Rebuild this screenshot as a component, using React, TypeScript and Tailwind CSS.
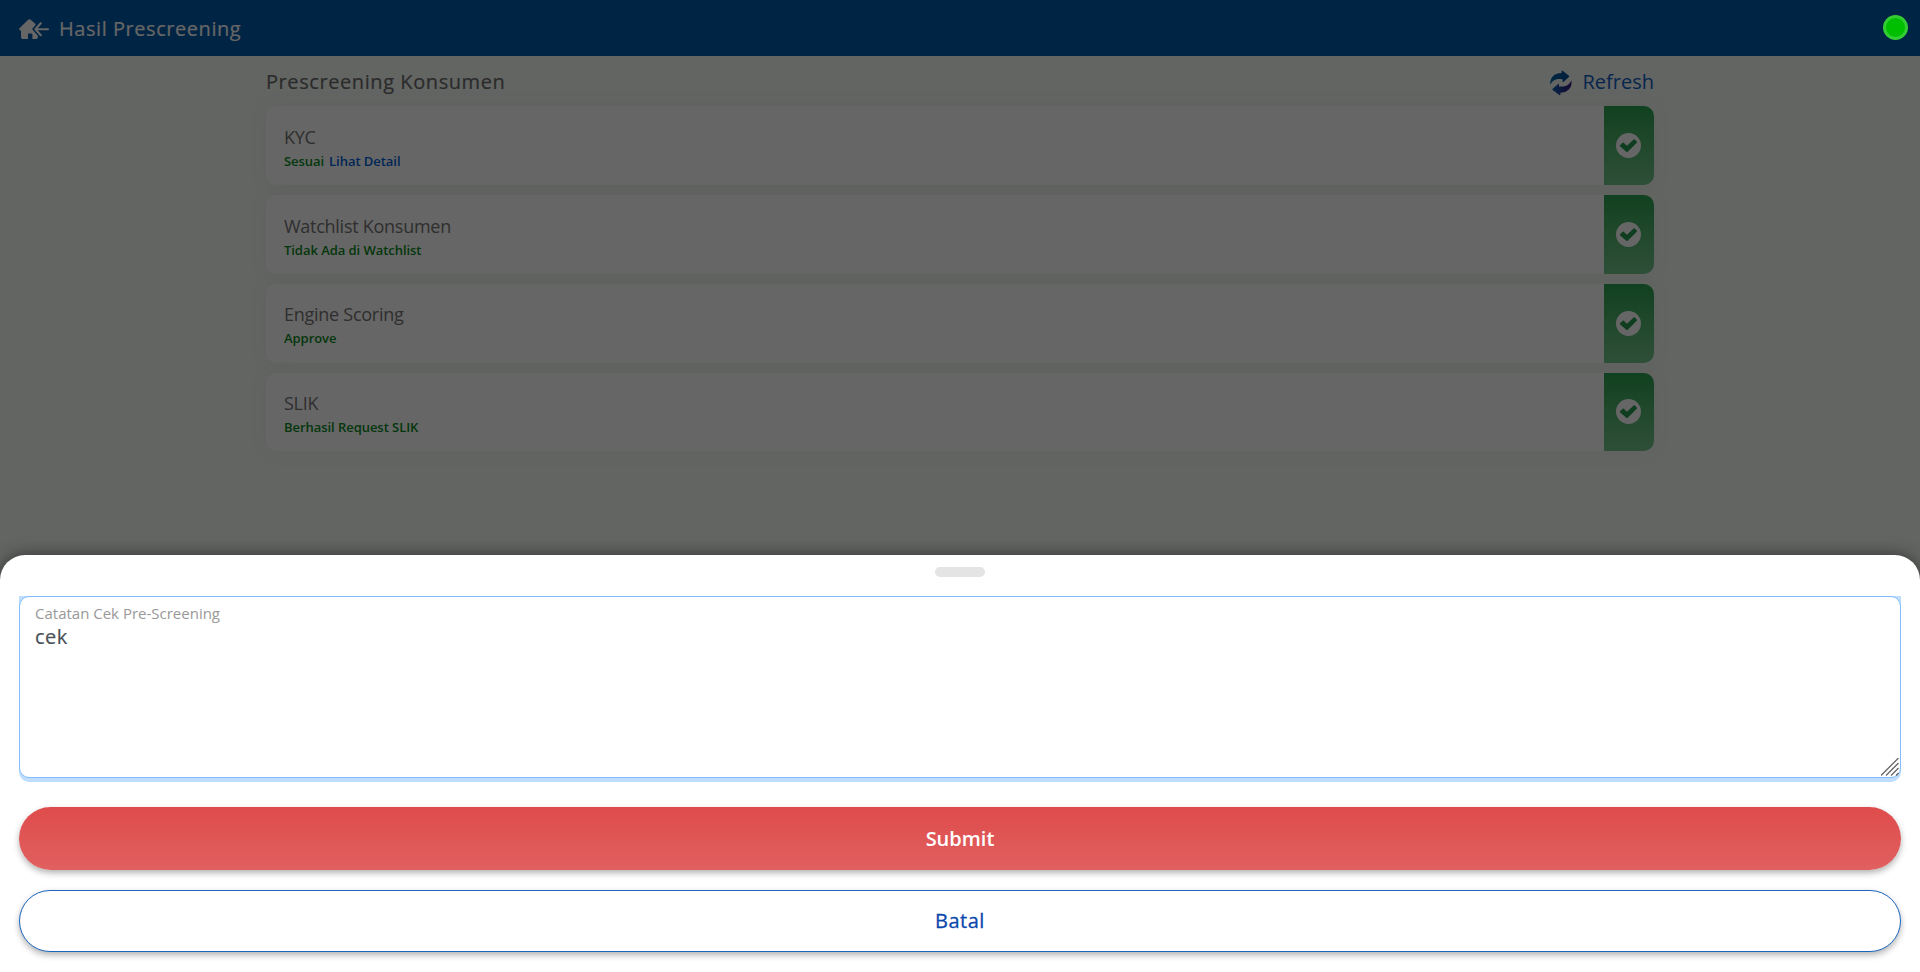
import React from "react";

const cards = [
  { title: "KYC", status: "Sesuai", link: "Lihat Detail", height: "h-[79px]", pad: "pt-[3px]", iconPad: "pb-0" },
  { title: "Watchlist Konsumen", status: "Tidak Ada di Watchlist", height: "h-[79px]", pad: "pt-[3px]", iconPad: "pb-0" },
  { title: "Engine Scoring", status: "Approve", height: "h-[79px]", pad: "pt-[1px]", iconPad: "pb-0" },
  { title: "SLIK", status: "Berhasil Request SLIK", height: "h-[78px]", pad: "pt-[2px]", iconPad: "pb-[1px]" },
];

function HomeBackIcon() {
  return (
    <svg viewBox="0 0 30 20" className="h-5 w-[30px]" fill="#fff">
      <path d="M9.4 0.6 Q10.4 -0.3 11.4 0.6 L16 4.6 Q17 5.5 16.2 6.4 L13.6 9.2 Q13 10 13.6 10.8 L18.6 16.4 Q19.3 17.4 18.8 18.4 Q18.4 20 17 20 H13.4 V15.4 Q13.4 14.6 12.6 14.6 H9.8 Q9 14.6 9 15.4 V20 H3.4 Q2 20 2 18.6 V11.4 H1 Q-0.6 10.4 0.5 9.3 Z" />
      <path d="M21.8 4.2 L16.4 10.2 L21.8 16.2 M16.4 10.2 H29" fill="none" stroke="#fff" strokeWidth="2.1" strokeLinejoin="round" strokeLinecap="round" />
    </svg>
  );
}

function RefreshIcon() {
  return (
    <svg viewBox="0 0 22 26" className="mt-[2px] h-[26px] w-[22px]">
      <defs>
        <linearGradient id="r1" x1="0" y1="0" x2="1" y2="0">
          <stop offset="0" stopColor="#0064a8" />
          <stop offset="1" stopColor="#004c94" />
        </linearGradient>
        <linearGradient id="r2" x1="0" y1="0" x2="1" y2="0">
          <stop offset="0" stopColor="#0a60b4" />
          <stop offset="1" stopColor="#3c1478" />
        </linearGradient>
      </defs>
      <path fill="url(#r1)" d="M0.4 14.8 C-0.4 7.4 4.4 3 11.6 3 V1 Q11.8 0.2 12.6 0.8 L18.9 5.7 Q19.5 6.3 18.9 6.9 L13.4 12 Q12.7 12.4 12.6 11.6 V9.4 C7.4 8.4 2.8 9.6 0.4 14.8 Z" />
      <path fill="url(#r2)" d="M21.4 10.6 C22.4 17.8 17.6 22.4 10.4 22.7 V24.8 Q10.2 25.6 9.4 25 L2.6 19.9 Q2 19.4 2.6 18.8 L8.2 13.9 Q8.9 13.5 9 14.3 V16.4 C14.6 17 19 16 21.4 10.6 Z" />
    </svg>
  );
}

function CheckIcon() {
  return (
    <svg viewBox="0 0 25 25" className="mr-[1px] size-[25px]">
      <circle cx="12.5" cy="12.5" r="12.5" fill="#fff" />
      <path
        d="M3.9 12.4 L6.5 9.7 Q7.1 9.2 7.7 9.7 L11 12.8 L17.6 6.4 Q18.2 5.9 18.8 6.4 L20.8 8.5 Q21.3 9.1 20.8 9.7 L11.7 18.8 Q11 19.4 10.3 18.8 L3.9 13.3 Q3.5 12.8 3.9 12.4 Z"
        fill="#249a4e"
      />
    </svg>
  );
}

export default function App() {
  return (
    <div className="relative h-[972px] w-full overflow-hidden bg-[#f7fcf8] font-['Open_Sans',sans-serif]">
      <header className="flex h-14 items-center bg-[#005aaa] pl-[19px] pt-[2px]">
        <HomeBackIcon />
        <h1 className="ml-[10px] text-[20px] font-medium leading-[30px] tracking-[0.55px] text-white [-webkit-text-stroke:0.15px]">Hasil Prescreening</h1>
      </header>
      <main className="mx-auto w-[1388px]">
        <div className="flex h-[50px] items-center justify-between pt-[2px]">
          <h2 className="text-[20px] font-medium leading-[30px] tracking-[0.58px] text-[#6b6b6b] [-webkit-text-stroke:0.2px]">Prescreening Konsumen</h2>
          <button className="flex items-center text-[20px] leading-[30px] text-[#0f5cc0]">
            <RefreshIcon />
            <span className="ml-[10px]">Refresh</span>
          </button>
        </div>
        <div className="flex flex-col gap-[10px]">
          {cards.map((c) => (
            <section key={c.title} className={`flex ${c.height} rounded-[10px] bg-white shadow-[0_0_20px_rgba(80,100,40,0.07)]`}>
              <div className={`flex flex-1 flex-col justify-center pl-[18px] ${c.pad}`}>
                <p className="text-[18px] leading-[27px] tracking-[-0.27px] text-[#757575]">{c.title}</p>
                <p className="flex gap-[5px] text-[13px] font-semibold leading-5 tracking-[-0.05px] text-[#0b8a22]">
                  <span>{c.status}</span>
                  {c.link && <span className="text-[#005fd6]">{c.link}</span>}
                </p>
              </div>
              <div className={`flex w-[50px] items-center justify-center rounded-r-[10px] bg-linear-to-b from-[#28a34f] to-[#74c58c] ${c.iconPad}`}>
                <CheckIcon />
              </div>
            </section>
          ))}
        </div>
      </main>
      <div className="absolute inset-0 bg-black/60" />
      <div className="absolute right-3 top-[15px] size-[25px] rounded-full border-[3px] border-[#33cc33] bg-[#00bf00]" />
      <div className="absolute inset-x-0 bottom-0 flex h-[417px] flex-col rounded-t-[25px] bg-white px-[19px] pt-3 shadow-[0_0_16px_rgba(0,0,0,0.5)]">
        <div className="h-[10px] w-[50px] self-center rounded-full bg-[#e4e4e4]" />
        <div className="mt-[19px] rounded-b-[10px] bg-[#bfdeff] pb-1">
          <div className="flex h-[182px] flex-col rounded-[10px] border border-[#80bdff] bg-white pl-[15px] pt-[5px]">
            <label className="text-[15px] leading-[22px] text-[#999]">Catatan Cek Pre-Screening</label>
            <p className="mt-[1px] text-[20px] font-medium leading-[24px] tracking-[0.5px] text-[#495057] [-webkit-text-stroke:0.2px]">cek</p>
            <svg viewBox="0 0 18 18" className="mb-[1px] mr-[1px] mt-auto size-[18px] self-end" stroke="#666" strokeWidth="1.3">
              <path d="M0 17.5 L17.5 0 M5 17.5 L17.5 5 M10 17.5 L17.5 10 M15 17.5 L17.5 15" />
            </svg>
          </div>
        </div>
        <button className="mt-[25px] h-[63px] shrink-0 rounded-full bg-linear-to-b from-[#df4b4b] to-[#e06060] text-[20px] font-semibold text-white shadow-[0_3px_6px_rgba(0,0,0,0.3)]">Submit</button>
        <button className="mt-5 h-[62px] shrink-0 rounded-full border border-[#1c66bd] bg-white text-[20px] font-medium tracking-[0.5px] text-[#0a48ac] shadow-[0_3px_6px_rgba(0,0,0,0.3)] [-webkit-text-stroke:0.3px]">Batal</button>
      </div>
    </div>
  );
}
